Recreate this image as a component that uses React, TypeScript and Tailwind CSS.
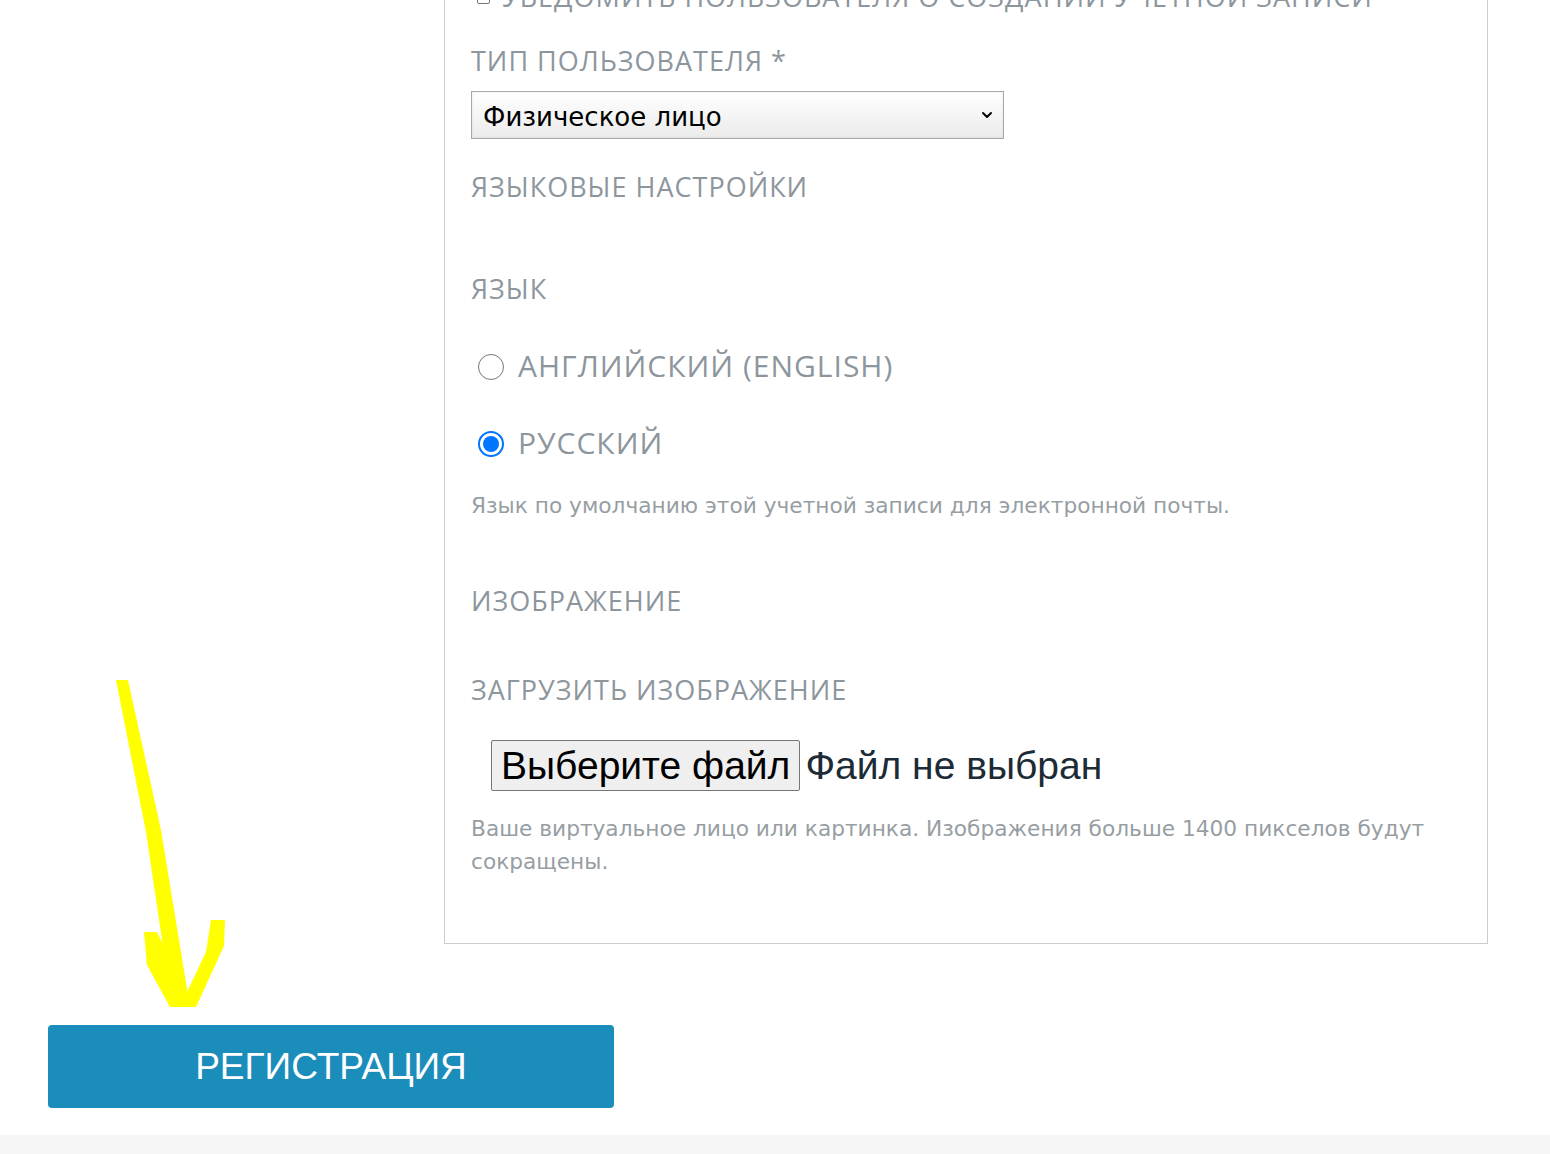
import { ChevronDown } from "lucide-react";

const label = "font-['Open_Sans',sans-serif] text-[27px] leading-[32px] tracking-[1px] text-[#8d969d] uppercase";
const hint = "font-['DejaVu_Sans',sans-serif] text-[21.7px] text-[#979ea3]";

function Radio({ checked, text }: { checked?: boolean; text: string }) {
  return (
    <div className="flex items-center h-[40px] pl-[7px]">
      {checked ? (
        <span className="w-[26px] h-[26px] rounded-full border-[2px] border-[#0075ff] bg-white flex items-center justify-center">
          <span className="w-[16px] h-[16px] rounded-full bg-[#0075ff]" />
        </span>
      ) : (
        <span className="w-[26px] h-[26px] rounded-full border border-[#767676] bg-white" />
      )}
      <span className="ml-[14px] -mt-[4px] font-['Open_Sans',sans-serif] text-[30px] tracking-[1px] text-[#8d969d] uppercase">
        {text}
      </span>
    </div>
  );
}

function Arrow() {
  return (
    <svg className="absolute left-0 top-0 pointer-events-none" width="260" height="1020" viewBox="0 0 260 1020">
      <polygon fill="#ffff00" points="116,680 128,680 161,830 190,1007 172,1007 146,832" />
      <polygon fill="#ffff00" points="144,932 157,932 172,962 188,1007 170,1007 147,965" />
      <polygon fill="#ffff00" points="211,920 225,920 224,946 196,1007 180,1007 206,952" />
    </svg>
  );
}

export default function App() {
  return (
    <div className="relative min-h-[1154px] bg-white overflow-hidden">
      <div className="pl-[48px]">
        <div className="flex">
          <div className="w-[396px] shrink-0" />
          <div className="w-[1044px] shrink-0 border border-t-0 border-[#cccccc] -mt-[19px] px-[26px] pb-[65px]">
            <div className="flex items-center h-[32px] pl-[6px]">
              <span className="w-[13px] h-[13px] border border-[#767676] rounded-[2px]" />
              <span className={`ml-[12px] ${label}`}>Уведомить пользователя о создании учетной записи</span>
            </div>

            <div className={`mt-[32px] ${label}`}>Тип пользователя *</div>
            <div className="mt-[14px] w-[533px] h-[48px] border border-[#a9a9a9] bg-gradient-to-b from-white to-[#ebebeb] flex items-center justify-between pl-[11px] pr-[8px] shadow-[inset_0_0_3px_rgba(0,0,0,0.08)]">
              <span className="pt-[4px] font-['DejaVu_Sans',sans-serif] text-[26px] text-black">Физическое лицо</span>
              <ChevronDown size={16} strokeWidth={3} className="text-black" />
            </div>

            <div className={`mt-[32px] ${label}`}>Языковые настройки</div>
            <div className={`mt-[70px] ${label}`}>Язык</div>

            <div className="mt-[42px]">
              <Radio text="Английский (English)" />
            </div>
            <div className="mt-[37px]">
              <Radio checked text="Русский" />
            </div>
            <div className={`mt-[28px] leading-[28px] ${hint}`}>Язык по умолчанию этой учетной записи для электронной почты.</div>

            <div className={`mt-[65px] ${label}`}>Изображение</div>
            <div className={`mt-[57px] ${label}`}>Загрузить изображение</div>

            <div className="mt-[34px] flex items-center pl-[20px] h-[51px]">
              <button className="h-[51px] px-[9px] border border-[#767676] rounded-[2px] bg-[#efefef] font-['Liberation_Sans',sans-serif] text-[39px] leading-none text-black">
                Выберите файл
              </button>
              <span className="ml-[5px] font-['Liberation_Sans',sans-serif] text-[39px] leading-none text-[#1c2b36]">Файл не выбран</span>
            </div>

            <div className={`mt-[21px] leading-[33px] ${hint}`}>
              Ваше виртуальное лицо или картинка. Изображения больше 1400 пикселов будут сокращены.
            </div>
          </div>
        </div>

        <button className="mt-[81px] w-[566px] h-[83px] rounded-[4px] bg-[#1b8dba] font-['Liberation_Sans',sans-serif] text-[37px] text-white">
          РЕГИСТРАЦИЯ
        </button>
      </div>
      <div className="mt-[27px] h-[20px] bg-[#f6f6f6]" />
      <Arrow />
    </div>
  );
}
